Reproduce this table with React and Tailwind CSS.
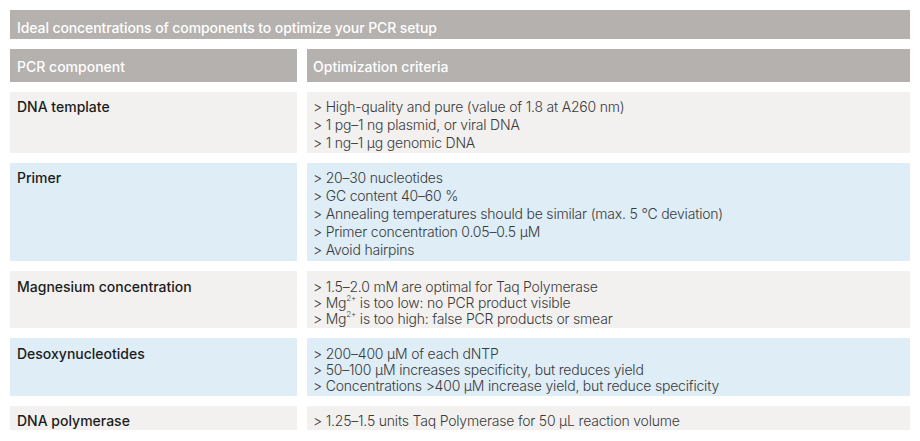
import React from "react";

const Mg = () => (
  <>
    Mg<sup className="text-[8px] relative -top-[1px] align-super leading-none">2+</sup>
  </>
);

const rows = [
  {
    label: "DNA template",
    bg: "bg-[#f2f1f0]",
    h: "h-[61px]",
    lead: "leading-[18px] pt-[6px]",
    items: [
      "> High-quality and pure (value of 1.8 at A260 nm)",
      "> 1 pg–1 ng plasmid, or viral DNA",
      "> 1 ng–1 µg genomic DNA",
    ],
  },
  {
    label: "Primer",
    bg: "bg-[#deedf6]",
    h: "h-[98px]",
    lead: "leading-[18px] pt-[6px]",
    items: [
      "> 20–30 nucleotides",
      "> GC content 40–60 %",
      "> Annealing temperatures should be similar (max. 5 °C deviation)",
      "> Primer concentration 0.05–0.5 µM",
      "> Avoid hairpins",
    ],
  },
  {
    label: "Magnesium concentration",
    bg: "bg-[#f2f1f0]",
    h: "h-[57px]",
    lead: "leading-[16px] pt-[8px]",
    items: [
      "> 1.5–2.0 mM are optimal for Taq Polymerase",
      <>
        {"> "}
        <Mg /> is too low: no PCR product visible
      </>,
      <>
        {"> "}
        <Mg /> is too high: false PCR products or smear
      </>,
    ],
  },
  {
    label: "Desoxynucleotides",
    bg: "bg-[#deedf6]",
    h: "h-[58px]",
    lead: "leading-[16px] pt-[8px]",
    items: [
      "> 200–400 µM of each dNTP",
      "> 50–100 µM increases specificity, but reduces yield",
      "> Concentrations >400 µM increase yield, but reduce specificity",
    ],
  },
  {
    label: "DNA polymerase",
    bg: "bg-[#f2f1f0]",
    h: "h-[24px]",
    lead: "leading-[18px] pt-[6px]",
    items: ["> 1.25–1.5 units Taq Polymerase for 50 µL reaction volume"],
  },
];

export default function App() {
  return (
    <div
      className="w-[920px] h-[441px] bg-white overflow-hidden px-[10px] pt-[10px] flex flex-col gap-[10px] text-[14px]"
      style={{ fontFamily: "Inter, 'Liberation Sans', sans-serif" }}
    >
      <div className="h-[29px] bg-[#b4b1af] text-white font-medium tracking-[-0.1px] leading-[18px] pt-[9px] px-[7px]">
        Ideal concentrations of components to optimize your PCR setup
      </div>
      <div className="grid grid-cols-[287px_603px] gap-[10px]">
        <div className="h-[33px] bg-[#b4b1af] text-white font-medium leading-[18px] pt-[9px] px-[7px]">
          PCR component
        </div>
        <div className="h-[33px] bg-[#b4b1af] text-white font-medium leading-[18px] pt-[9px] px-[6px]">
          Optimization criteria
        </div>
      </div>
      {rows.map((r, i) => (
        <div key={i} className="grid grid-cols-[287px_603px] gap-[10px] shrink-0">
          <div className={`${r.h} ${r.bg} ${r.lead} px-[7px] text-[#1c1c1c] font-medium overflow-hidden`}>
            {r.label}
          </div>
          <div className={`${r.h} ${r.bg} ${r.lead} px-[6px] text-[#3a3a3a] font-light tracking-[-0.2px] overflow-hidden`}>
            {r.items.map((t, j) => (
              <div key={j}>{t}</div>
            ))}
          </div>
        </div>
      ))}
    </div>
  );
}
